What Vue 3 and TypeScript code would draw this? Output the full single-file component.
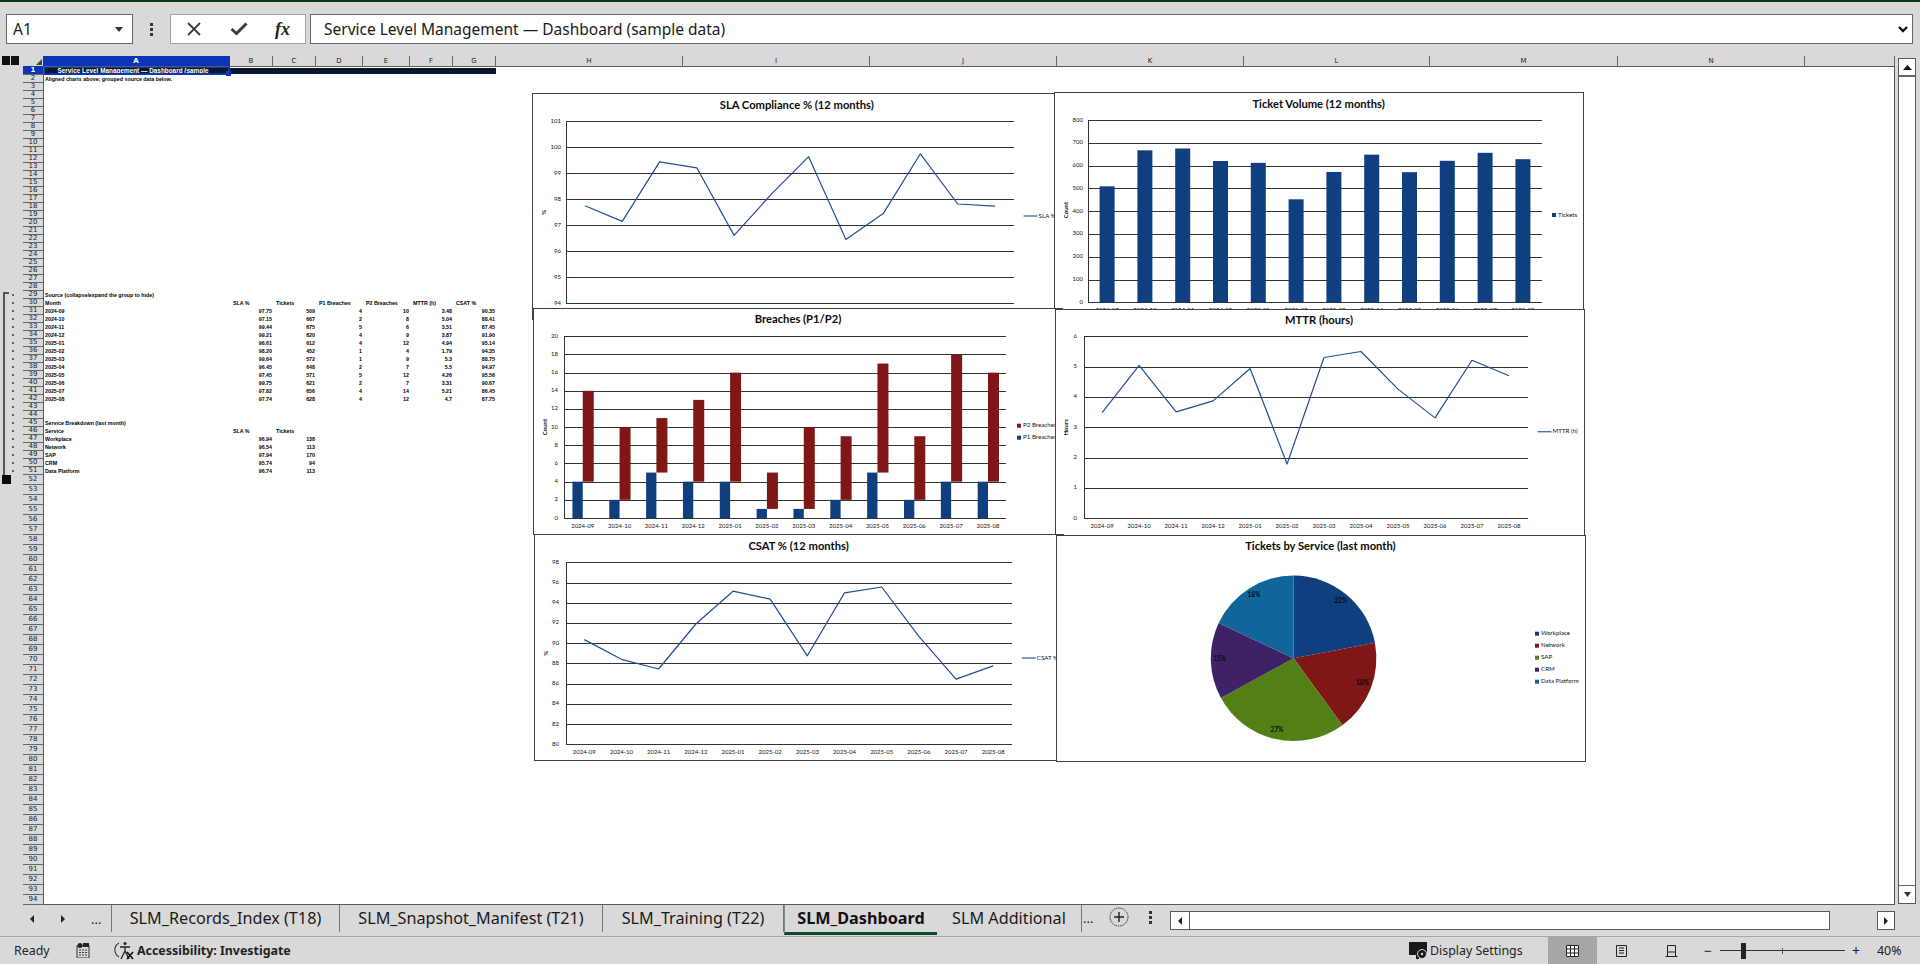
<script setup lang="ts">
interface Plot { l: number; r: number; t: number; b: number }
interface Bar { x: number; y: number; w: number; h: number; fill: string }
interface LegendItem { kind: 'line' | 'box'; x: number; y: number; text: string; fill: string }
interface Slice { d: string; fill: string }
interface PieLabel { x: number; y: number; text: string }
interface Chart {
  x: number; y: number; w: number; h: number; title: string; titleX: number; titleY: number;
  grid: number[]; plot: Plot | null;
  yLabels: { y: number; text: string }[]; yLabelX: number;
  xLabels: { x: number; y: number; text: string }[];
  axisTitle: string; axisX: number; axisY: number;
  bars: Bar[]; line: string; legend: LegendItem[]; slices: Slice[]; pieLabels: PieLabel[];
}

const BLUE = '#0f3f7f';
const RED = '#7f1717';
const months = ['2024-09', '2024-10', '2024-11', '2024-12', '2025-01', '2025-02', '2025-03', '2025-04', '2025-05', '2025-06', '2025-07', '2025-08'];
const sla = [97.75, 97.15, 99.44, 99.21, 96.61, 98.2, 99.64, 96.45, 97.45, 99.75, 97.82, 97.74];
const tickets = [509, 667, 675, 620, 612, 452, 572, 648, 571, 621, 656, 628];
const p1 = [4, 2, 5, 4, 4, 1, 1, 2, 5, 2, 4, 4];
const p2 = [10, 8, 6, 9, 12, 4, 9, 7, 12, 7, 14, 12];
const mttr = [3.48, 5.04, 3.51, 3.87, 4.94, 1.79, 5.3, 5.5, 4.26, 3.31, 5.21, 4.7];
const csat = [90.35, 88.41, 87.45, 91.9, 95.14, 94.35, 88.75, 94.97, 95.56, 90.67, 86.45, 87.75];
const services = [
  { name: 'Workplace', sla: 96.94, tickets: 138, fill: BLUE },
  { name: 'Network', sla: 96.54, tickets: 113, fill: RED },
  { name: 'SAP', sla: 97.94, tickets: 170, fill: '#527f16' },
  { name: 'CRM', sla: 95.74, tickets: 94, fill: '#3f2266' },
  { name: 'Data Platform', sla: 96.74, tickets: 113, fill: '#106699' },
];

function axes(plot: Plot, min: number, max: number, step: number, labelX: number) {
  const sy = (v: number) => plot.b - ((v - min) / (max - min)) * (plot.b - plot.t);
  const grid: number[] = [];
  const yLabels: { y: number; text: string }[] = [];
  for (let v = min; v <= max + 0.001; v += step) {
    grid.push(Math.round(sy(v)) + 0.5);
    yLabels.push({ y: sy(v), text: String(v) });
  }
  const cw = (plot.r - plot.l) / 12;
  const cx = (i: number) => plot.l + cw * (i + 0.5);
  const xLabels = months.map((text, i) => ({ x: cx(i), y: plot.b + 8.6, text }));
  return { sy, cx, cw, grid, yLabels, yLabelX: labelX, xLabels };
}

const empty = { bars: [] as Bar[], line: '', slices: [] as Slice[], pieLabels: [] as PieLabel[] };
const SIZE = { w: 530, h: 227 };

function lineChart(x: number, y: number, title: string, titleX: number, titleY: number, plot: Plot, min: number, max: number, step: number, labelX: number, axisTitle: string, axisX: number, values: number[], legendX: number, legendY: number, legendText: string): Chart {
  const a = axes(plot, min, max, step, labelX);
  return {
    x, y, ...SIZE, title, titleX, titleY, plot, grid: a.grid, yLabels: a.yLabels, yLabelX: labelX, xLabels: a.xLabels,
    axisTitle, axisX, axisY: (plot.t + plot.b) / 2, ...empty,
    line: values.map((v, i) => `${a.cx(i).toFixed(1)},${a.sy(v).toFixed(1)}`).join(' '),
    legend: [{ kind: 'line', x: legendX, y: legendY, text: legendText, fill: '#4a6fb5' }],
  };
}

function ticketChart(): Chart {
  const plot = { l: 1088.2, r: 1541.8, t: 120, b: 302.3 };
  const a = axes(plot, 0, 800, 100, 1083);
  return {
    x: 1054, y: 92, ...SIZE, title: 'Ticket Volume (12 months)', titleX: 1318.6, titleY: 105.2, plot,
    grid: a.grid, yLabels: a.yLabels, yLabelX: 1083, xLabels: a.xLabels, axisTitle: 'Count', axisX: 1066, axisY: 210, ...empty,
    bars: tickets.map((v, i) => ({ x: a.cx(i) - 7.5, y: a.sy(v), w: 15, h: plot.b - a.sy(v), fill: BLUE })),
    legend: [{ kind: 'box', x: 1552, y: 215, text: 'Tickets', fill: BLUE }],
  };
}

function breachChart(): Chart {
  const plot = { l: 564.3, r: 1006.4, t: 336.3, b: 518 };
  const a = axes(plot, 0, 20, 2, 558);
  const bars: Bar[] = [];
  months.forEach((_, i) => {
    bars.push({ x: a.cx(i) - 10.3, y: a.sy(p1[i]), w: 10.3, h: plot.b - a.sy(p1[i]), fill: BLUE });
    bars.push({ x: a.cx(i), y: a.sy(p1[i] + p2[i]), w: 11, h: a.sy(p1[i]) - a.sy(p1[i] + p2[i]), fill: RED });
  });
  return {
    x: 533, y: 308, ...SIZE, title: 'Breaches (P1/P2)', titleX: 798, titleY: 320.5, plot,
    grid: a.grid, yLabels: a.yLabels, yLabelX: 558, xLabels: a.xLabels, axisTitle: 'Count', axisX: 545.7, axisY: 427, ...empty, bars,
    legend: [
      { kind: 'box', x: 1017, y: 425.7, text: 'P2 Breaches', fill: RED },
      { kind: 'box', x: 1017, y: 437.7, text: 'P1 Breaches', fill: BLUE },
    ],
  };
}

function pieChart(): Chart {
  const cx = 1293.6, cy = 658.3, r = 82.8;
  const total = services.reduce((s, v) => s + v.tickets, 0);
  let acc = 0;
  const slices: Slice[] = services.map((s) => {
    const a0 = (acc / total) * Math.PI * 2;
    acc += s.tickets;
    const a1 = (acc / total) * Math.PI * 2;
    const p = (a: number) => `${(cx + r * Math.sin(a)).toFixed(2)} ${(cy - r * Math.cos(a)).toFixed(2)}`;
    return { d: `M${cx} ${cy}L${p(a0)}A${r} ${r} 0 ${a1 - a0 > Math.PI ? 1 : 0} 1 ${p(a1)}Z`, fill: s.fill };
  });
  return {
    x: 1056, y: 535, w: 530, h: 227, title: 'Tickets by Service (last month)', titleX: 1320.4, titleY: 547.5, plot: null,
    grid: [], yLabels: [], yLabelX: 0, xLabels: [], axisTitle: '', axisX: 0, axisY: 0, bars: [], line: '', slices,
    pieLabels: [
      { x: 1341, y: 601.7, text: '22%' },
      { x: 1362.5, y: 683.7, text: '18%' },
      { x: 1277, y: 730, text: '27%' },
      { x: 1220, y: 659.7, text: '15%' },
      { x: 1254, y: 595.7, text: '18%' },
    ],
    legend: services.map((s, i) => ({ kind: 'box' as const, x: 1535, y: 633.7 + i * 12, text: s.name, fill: s.fill })),
  };
}

const charts: Chart[] = [
  lineChart(532, 93, 'SLA Compliance % (12 months)', 796.8, 105.8, { l: 566.4, r: 1013.6, t: 121.3, b: 303.3 }, 94, 101, 1, 561, '%', 544, sla, 1023.6, 216, 'SLA %'),
  ticketChart(),
  breachChart(),
  lineChart(1055, 309, 'MTTR (hours)', 1319, 321, { l: 1083.6, r: 1527.5, t: 336.3, b: 518.3 }, 0, 6, 1, 1077, 'Hours', 1066.8, mttr, 1537.5, 431.7, 'MTTR (h)'),
  lineChart(534, 534, 'CSAT % (12 months)', 798.6, 546.7, { l: 565.7, r: 1011.8, t: 562.3, b: 744.3 }, 80, 98, 2, 559, '%', 546, csat, 1021.8, 658, 'CSAT %'),
  pieChart(),
];

const SHEET_X = 44;
const SHEET_Y = 67;
function chartBox(c: Chart) {
  return { left: `${c.x - SHEET_X}px`, top: `${c.y - SHEET_Y}px`, width: `${c.w}px`, height: `${c.h}px` };
}
function viewBox(c: Chart) {
  return `${c.x + 1} ${c.y + 1} ${c.w - 2} ${c.h - 2}`;
}

const columns = [
  { name: 'A', w: 187 }, { name: 'B', w: 43 }, { name: 'C', w: 43 }, { name: 'D', w: 47 }, { name: 'E', w: 47 }, { name: 'F', w: 43 }, { name: 'G', w: 43 },
  { name: 'H', w: 187 }, { name: 'I', w: 187 }, { name: 'J', w: 187 }, { name: 'K', w: 187 }, { name: 'L', w: 186 }, { name: 'M', w: 188 }, { name: 'N', w: 187 }, { name: '', w: 90 },
];

const rowNumbers = Array.from({ length: 94 }, (_, i) => i + 1);
const inGroup = (n: number) => n >= 29 && n <= 51;

interface Cell { text: string; kind: 'label' | 'head' | 'num' }
function sheetRow(n: number): Cell[] {
  const L = (text: string): Cell => ({ text, kind: 'label' });
  const H = (text: string): Cell => ({ text, kind: 'head' });
  const N = (v: number | string): Cell => ({ text: String(v), kind: 'num' });
  if (n === 2) return [L('Aligned charts above; grouped source data below.')];
  if (n === 29) return [L('Source (collapse/expand the group to hide)')];
  if (n === 30) return [L('Month'), H('SLA %'), H('Tickets'), H('P1 Breaches'), H('P2 Breaches'), H('MTTR (h)'), H('CSAT %')];
  if (n >= 31 && n <= 42) {
    const i = n - 31;
    return [L(months[i]), N(sla[i].toFixed(2)), N(tickets[i]), N(p1[i]), N(p2[i]), N(mttr[i]), N(csat[i].toFixed(2))];
  }
  if (n === 45) return [L('Service Breakdown (last month)')];
  if (n === 46) return [L('Service'), H('SLA %'), H('Tickets')];
  if (n >= 47 && n <= 51) {
    const s = services[n - 47];
    return [L(s.name), N(s.sla.toFixed(2)), N(s.tickets)];
  }
  return [];
}
const dataRows = Array.from({ length: 50 }, (_, i) => ({ n: i + 2, cells: sheetRow(i + 2) }));

const tabs = [
  { name: 'SLM_Records_Index (T18)', w: 228, active: false },
  { name: 'SLM_Snapshot_Manifest (T21)', w: 263, active: false },
  { name: 'SLM_Training (T22)', w: 181, active: false },
  { name: 'SLM_Dashboard', w: 153, active: true },
  { name: 'SLM Additional', w: 145, active: false },
];
</script>

<template>
  <div class="app">
    <div class="accent"></div>

    <div class="formula-row">
      <div class="name-box">
        <span>A1</span>
        <svg width="8" height="5" viewBox="0 0 8 5"><path d="M0 0h8L4 5z" fill="#333" /></svg>
      </div>
      <div class="kebab"><i></i><i></i><i></i></div>
      <div class="fx-buttons">
        <svg class="fx-icon" width="16" height="14" viewBox="0 0 16 14"><path d="M2 1l12 12M14 1L2 13" stroke="#3c3c3c" stroke-width="1.8" fill="none" /></svg>
        <svg class="fx-icon" width="18" height="14" viewBox="0 0 18 14"><path d="M1.5 7l5 4.5L16.500 1.500" stroke="#3c3c3c" stroke-width="3" fill="none" /></svg>
        <span class="fx-text">fx</span>
      </div>
      <div class="formula-input">
        <span>Service Level Management — Dashboard (sample data)</span>
        <svg width="10" height="7" viewBox="0 0 10 7"><path d="M1 1l4 4 4-4" stroke="#111" stroke-width="2.400" fill="none" /></svg>
      </div>
    </div>

    <div class="grid-region">
      <div class="grid-main">
        <div class="col-row">
          <div class="levels"><i></i><i></i></div>
          <div class="corner"><svg width="6" height="6" viewBox="0 0 6 6"><path d="M6 0v6H0z" fill="#444" /></svg></div>
          <div v-for="c in columns" :key="c.name" class="col" :class="{ selected: c.name === 'A' }" :style="{ width: c.w + 'px' }">{{ c.name }}</div>
        </div>

        <div class="body">
          <div class="rows-col">
            <div v-for="n in rowNumbers" :key="n" class="row-line" :class="{ first: n === 1, tall: n > 51 }">
              <div class="gut"><i v-if="inGroup(n)"></i></div>
              <div class="rownum" :class="{ selected: n === 1 }">{{ n }}</div>
            </div>
            <div class="group-bracket"></div>
            <div class="group-button"></div>
          </div>

          <div class="sheet">
            <div class="title-row">
              <div class="band"><span class="a1-text">Service Level Management — Dashboard (sample data)</span></div>
            </div>
            <div v-for="r in dataRows" :key="r.n" class="data-row">
              <span v-for="(c, i) in r.cells" :key="i" class="cell" :class="c.kind">{{ c.text }}</span>
            </div>

            <div class="selection"><i></i></div>

            <div v-for="c in charts" :key="c.title" class="chart" :style="chartBox(c)">
              <svg :width="c.w - 2" :height="c.h - 2" :viewBox="viewBox(c)">
                <text class="chart-title" :x="c.titleX" :y="c.titleY" text-anchor="middle" dominant-baseline="middle">{{ c.title }}</text>
                <template v-if="c.plot">
                  <line v-for="g in c.grid" :key="g" class="gridline" :x1="c.plot.l" :x2="c.plot.r" :y1="g" :y2="g" />
                  <line class="gridline" :x1="Math.round(c.plot.l) + 0.5" :x2="Math.round(c.plot.l) + 0.5" :y1="c.plot.t" :y2="c.plot.b" />
                  <text v-for="l in c.yLabels" :key="l.text" class="axis" :x="c.yLabelX" :y="l.y" text-anchor="end" dominant-baseline="middle">{{ l.text }}</text>
                  <text v-for="l in c.xLabels" :key="l.text" class="axis" :x="l.x" :y="l.y" text-anchor="middle" dominant-baseline="middle">{{ l.text }}</text>
                  <text class="axis-title" :transform="`translate(${c.axisX} ${c.axisY}) rotate(-90)`" text-anchor="middle" dominant-baseline="middle">{{ c.axisTitle }}</text>
                </template>
                <rect v-for="(b, i) in c.bars" :key="i" :x="b.x" :y="b.y" :width="b.w" :height="b.h" :fill="b.fill" />
                <polyline v-if="c.line" class="series" :points="c.line" />
                <path v-for="(s, i) in c.slices" :key="i" :d="s.d" :fill="s.fill" />
                <text v-for="(l, i) in c.pieLabels" :key="i" class="pie-label" :x="l.x" :y="l.y" text-anchor="middle" dominant-baseline="middle">{{ l.text }}</text>
                <g v-for="l in c.legend" :key="l.text">
                  <template v-if="l.kind === 'line'">
                    <line :x1="l.x" :x2="l.x + 14" :y1="l.y" :y2="l.y" :stroke="l.fill" stroke-width="1.400" />
                    <text class="legend" :x="l.x + 15" :y="l.y" dominant-baseline="middle">{{ l.text }}</text>
                  </template>
                  <template v-else>
                    <rect :x="l.x" :y="l.y - 2" width="4" height="4" :fill="l.fill" />
                    <text class="legend" :x="l.x + 6" :y="l.y" dominant-baseline="middle">{{ l.text }}</text>
                  </template>
                </g>
              </svg>
            </div>
          </div>
        </div>
      </div>

      <div class="vscroll">
        <div class="vbtn up"><svg width="9" height="5" viewBox="0 0 9 5"><path d="M0 5h9L4.500 0z" fill="#111" /></svg></div>
        <div class="vbtn down"><svg width="7" height="5" viewBox="0 0 7 5"><path d="M0 0h7L3.500 5z" fill="#333" /></svg></div>
      </div>
    </div>

    <div class="tab-bar">
      <div class="tab-nav">
        <svg width="4" height="8" viewBox="0 0 4 8"><path d="M4 0v8L0 4z" fill="#222" /></svg>
        <svg width="4" height="8" viewBox="0 0 4 8"><path d="M0 0v8l4-4z" fill="#222" /></svg>
        <span>...</span>
      </div>
      <div v-for="t in tabs" :key="t.name" class="tab" :class="{ active: t.active }" :style="{ width: t.w + 'px' }">{{ t.name }}</div>
      <span class="tab-more">...</span>
      <svg class="add-sheet" width="20" height="20" viewBox="0 0 20 20">
        <circle cx="10" cy="10" r="9" fill="none" stroke="#333" stroke-dasharray="1.500 .8" />
        <path d="M10 5v10M5 10h10" stroke="#222" stroke-width="1.400" />
      </svg>
      <div class="kebab small"><i></i><i></i><i></i></div>
      <div class="hscroll">
        <div class="hbtn"><svg width="4" height="8" viewBox="0 0 4 8"><path d="M4 0v8L0 4z" fill="#222" /></svg></div>
      </div>
      <div class="hbtn alone"><svg width="4" height="8" viewBox="0 0 4 8"><path d="M0 0v8l4-4z" fill="#222" /></svg></div>
    </div>

    <div class="status-bar">
      <span class="ready">Ready</span>
      <svg class="calc" width="14" height="15" viewBox="0 0 14 15">
        <rect x="1" y="3" width="12" height="12" fill="none" stroke="#333" />
        <circle cx="4" cy="2.500" r="2.500" fill="#222" /><rect x="7" y="0" width="6" height="4" fill="#222" />
        <path d="M3 7h2M6 7h2M9 7h2M3 9.500h2M6 9.500h2M9 9.500h2M3 12h2M6 12h2M9 12h2" stroke="#333" />
      </svg>
      <svg class="a11y" width="21" height="19" viewBox="0 0 21 19">
        <path d="M5 2a8 8 0 0 0 0 14" fill="none" stroke="#333" stroke-width="1.100" />
        <circle cx="11" cy="2.500" r="1.500" fill="#222" />
        <path d="M6 6h10M11 6v4M7 18l4-8 4 8" fill="none" stroke="#222" stroke-width="1.300" />
        <path d="M13 11l6 7M19 11l-6 7" stroke="#111" stroke-width="1.600" />
      </svg>
      <span class="a11y-text">Accessibility: Investigate</span>
      <span class="spacer"></span>
      <svg class="display" width="19" height="18" viewBox="0 0 19 18">
        <rect x="0" y="0" width="18" height="13" fill="#1a1a1a" />
        <rect x="7" y="13" width="3" height="4" fill="#1a1a1a" />
        <circle cx="13" cy="12" r="4.500" fill="#1a1a1a" stroke="#d9d9d9" />
        <circle cx="13" cy="12" r="1.200" fill="#d9d9d9" />
      </svg>
      <span class="display-text">Display Settings</span>
      <div class="view-btn on">
        <svg width="13" height="12" viewBox="0 0 13 12"><rect width="13" height="12" fill="#fff" /><path d="M.5 .5h12v11H.5zM.5 4h12M.5 8h12M4.500 .5v11M8.500 .5v11" fill="none" stroke="#222" /></svg>
      </div>
      <div class="view-btn">
        <svg width="11" height="12" viewBox="0 0 11 12"><path d="M.5 .5h10v11H.5zM3 3h5M3 5.500h5M3 8h5" fill="none" stroke="#222" /></svg>
      </div>
      <div class="view-btn">
        <svg width="13" height="12" viewBox="0 0 13 12"><path d="M.5 11.500h12M2.500 11V.5h8V11M2.500 7h8" fill="none" stroke="#222" /></svg>
      </div>
      <div class="zoom">
        <span class="zoom-sign">−</span>
        <div class="slider"><i class="tick"></i><i class="thumb"></i></div>
        <span class="zoom-sign">+</span>
      </div>
      <span class="percent">40%</span>
    </div>
  </div>
</template>

<style>
html, body { overflow: hidden; background: #d9d9d9; }
</style>

<style scoped>
.app {
  width: 1920px;
  height: 964px;
  background: #d9d9d9;
  display: flex;
  flex-direction: column;
  overflow: hidden;
  font-family: "Noto Sans", "Open Sans", sans-serif;
  color: #1a1a1a;
}
.accent { height: 2px; background: #0b3b1e; flex: none; }

.formula-row {
  height: 54px;
  flex: none;
  display: flex;
  align-items: flex-start;
  padding: 12px 7px 0 6px;
  box-sizing: border-box;
}
.name-box {
  width: 127px;
  height: 30px;
  box-sizing: border-box;
  border: 1px solid #666;
  background: #fff;
  display: flex;
  align-items: center;
  justify-content: space-between;
  padding: 0 9px 0 6px;
  font-size: 15.500px;
}
.kebab {
  width: 37px;
  height: 30px;
  display: flex;
  flex-direction: column;
  align-items: center;
  justify-content: center;
  gap: 2px;
  flex: none;
}
.kebab i { width: 3px; height: 3px; background: #333; display: block; }
.fx-buttons {
  width: 136px;
  height: 30px;
  box-sizing: border-box;
  border: 1px solid #a3a3a3;
  background: #fff;
  display: flex;
  align-items: center;
  justify-content: space-between;
  padding: 0 15px;
  flex: none;
}
.fx-text {
  font-family: "Liberation Serif", serif;
  font-style: italic;
  font-weight: 700;
  font-size: 18px;
  line-height: 20px;
  color: #222;
}
.formula-input {
  margin-left: 4px;
  flex: 1;
  height: 30px;
  box-sizing: border-box;
  border: 1px solid #666;
  background: #fff;
  display: flex;
  align-items: center;
  justify-content: space-between;
  padding: 0 4px 0 13px;
  font-size: 15.500px;
}

.grid-region { height: 849px; flex: none; display: flex; }
.grid-main { width: 1895px; flex: none; display: flex; flex-direction: column; }

.col-row { height: 10px; display: flex; flex: none; }
.levels { width: 23px; display: flex; gap: 1px; padding-left: 2px; box-sizing: border-box; flex: none; }
.levels i { width: 8px; height: 9px; background: #111; display: block; }
.corner {
  width: 20px;
  display: flex;
  justify-content: flex-end;
  align-items: flex-end;
  padding: 0 1px 1px 0;
  box-sizing: border-box;
  flex: none;
}
.col {
  box-sizing: border-box;
  flex: none;
  border-right: 1px solid #666;
  font-family: "DejaVu Sans", sans-serif;
  font-size: 7px;
  line-height: 10px;
  text-align: center;
  color: #222;
}
.col.selected { background: #0a35b5; color: #fff; border-right-color: #0a35b5; font-weight: 700; }

.body { height: 839px; display: flex; flex: none; }
.rows-col { width: 43px; flex: none; position: relative; }
.row-line { height: 8px; display: flex; box-sizing: border-box; }
.row-line.first { height: 9px; }
.row-line.tall { height: 10px; }
.gut { width: 23px; display: flex; align-items: center; justify-content: flex-end; padding-right: 9px; box-sizing: border-box; flex: none; }
.gut i { width: 2px; height: 2px; background: #666; display: block; }
.rownum {
  width: 20px;
  box-sizing: border-box;
  border-bottom: 1px solid #666;
  font-family: "DejaVu Sans", sans-serif;
  font-size: 7px;
  line-height: 7px;
  text-align: center;
  color: #222;
  overflow: hidden;
}
.row-line.first .rownum { line-height: 8px; }
.row-line.tall .rownum { line-height: 9px; }
.rownum.selected { background: #0a35b5; color: #fff; font-weight: 700; }
.group-bracket {
  position: absolute;
  left: 3px;
  top: 226px;
  width: 6px;
  height: 183px;
  box-sizing: border-box;
  border-left: 2px solid #555;
  border-top: 2px solid #555;
}
.group-button { position: absolute; left: 2px; top: 409px; width: 9px; height: 9px; background: #0a0a0a; }

.sheet {
  width: 1852px;
  flex: none;
  box-sizing: border-box;
  border: 1px solid #595959;
  background: #fff;
  position: relative;
  overflow: hidden;
}
.title-row { height: 8px; padding-top: 1px; box-sizing: border-box; }
.band {
  width: 452px;
  height: 6px;
  background: #06182f;
  overflow: hidden;
}
.a1-text {
  display: block;
  width: 160px;
  margin-left: 9px;
  color: #fff;
  font: 700 6.400px/5px "Liberation Sans", sans-serif;
  text-align: center;
}
.data-row {
  height: 8px;
  display: grid;
  grid-template-columns: 186px 43px 43px 47px 47px 43px 43px;
  font: 700 5.300px/8px "Liberation Sans", sans-serif;
  color: #000;
}
.cell { white-space: nowrap; box-sizing: border-box; }
.cell.label { padding-left: 1px; }
.cell.head { padding-left: 3px; }
.cell.num { text-align: right; padding-right: 1px; }
.selection {
  position: absolute;
  left: -1px;
  top: -1px;
  width: 187px;
  height: 9px;
  box-sizing: border-box;
  border: 2px solid #0a35b5;
  z-index: 1;
}
.selection i { position: absolute; right: -3px; bottom: -3px; width: 5px; height: 5px; background: #0a35b5; display: block; }

.chart {
  position: absolute;
  box-sizing: border-box;
  border: 1px solid #404040;
  background: #fff;
  overflow: hidden;
  z-index: 2;
}
.chart svg { display: block; }
.chart-title { font: 700 11.200px Lato, "Liberation Sans", sans-serif; fill: #0a0a0a; }
.gridline { stroke: #333; stroke-width: 1; shape-rendering: crispEdges; }
.axis { font: 400 6px Lato, "Liberation Sans", sans-serif; fill: #111; }
.axis-title { font: 700 6px Lato, "Liberation Sans", sans-serif; fill: #111; }
.legend { font: 400 6.200px Lato, "Liberation Sans", sans-serif; fill: #111; }
.pie-label { font: 700 6.500px Lato, "Liberation Sans", sans-serif; fill: #0a0a0a; }
.series { fill: none; stroke: #1f4e96; stroke-width: 1.200; stroke-linejoin: round; }

.vscroll {
  width: 18px;
  flex: none;
  margin: 2px 0 1px 3px;
  box-sizing: border-box;
  border: 1px solid #595959;
  background: #fff;
  display: flex;
  flex-direction: column;
  justify-content: space-between;
}
.vbtn { height: 18px; display: flex; align-items: center; justify-content: center; box-sizing: border-box; }
.vbtn.up { border-bottom: 2px solid #666; }
.vbtn.down { border-top: 1px solid #666; }

.tab-bar {
  height: 31px;
  flex: none;
  display: flex;
  align-items: flex-start;
  font-size: 16.200px;
  border-bottom: 1px solid #a6a6a6;
  box-sizing: content-box;
}
.tab-nav {
  width: 112px;
  height: 27px;
  flex: none;
  display: flex;
  align-items: center;
  box-sizing: border-box;
  padding-left: 30px;
  gap: 27px;
  border-right: 1px solid #777;
}
.tab-nav span { margin-left: -1px; font-size: 13px; line-height: 12px; }
.tab {
  height: 27px;
  line-height: 27px;
  box-sizing: border-box;
  text-align: center;
  flex: none;
  border-right: 1px solid #777;
  white-space: nowrap;
  overflow: hidden;
}
.tab.active {
  height: 30px;
  font-weight: 700;
  border-right: 0;
  border-left: 1px solid #888;
  border-bottom: 3px solid #0f4a2a;
  color: #111;
}
.tab:last-of-type { border-right: 0; }
.tab-more { width: 20px; flex: none; line-height: 27px; font-size: 13px; margin-left: 1px; }
.add-sheet { flex: none; margin: 2px 0 0 6px; }
.kebab.small { width: 20px; height: 20px; margin: 2px 0 0 11px; }
.hscroll {
  width: 660px;
  height: 19px;
  margin: 6px 0 0 10px;
  box-sizing: border-box;
  border: 1px solid #595959;
  background: #fff;
  flex: none;
  display: flex;
}
.hbtn {
  width: 19px;
  height: 17px;
  display: flex;
  align-items: center;
  justify-content: center;
  box-sizing: border-box;
  border-right: 1px solid #595959;
}
.hbtn.alone {
  width: 18px;
  height: 19px;
  margin: 6px 0 0 47px;
  background: #fff;
  border: 1px solid #595959;
  flex: none;
}

.status-bar {
  height: 27px;
  flex: none;
  display: flex;
  align-items: center;
  font-size: 12.400px;
  padding-left: 14px;
  color: #222;
}
.ready { width: 62px; flex: none; }
.calc { flex: none; }
.a11y { flex: none; margin-left: 24px; }
.a11y-text { font-weight: 700; margin-left: 2px; flex: none; }
.spacer { flex: 1; }
.display { flex: none; }
.display-text { flex: none; margin-left: 2px; width: 118px; }
.view-btn { width: 49px; height: 27px; display: flex; align-items: center; justify-content: center; flex: none; margin-right: 1px; }
.view-btn.on { background: #a6a6a6; margin-right: 0; }
.zoom { display: flex; align-items: center; flex: none; margin-left: 4px; }
.zoom-sign { font-size: 14px; width: 14px; text-align: center; }
.slider { width: 125px; height: 16px; position: relative; margin: 0 4px 0 5px; background: linear-gradient(#333, #333) center / 100% 1px no-repeat; }
.slider .tick { position: absolute; left: 62px; top: 5px; width: 1px; height: 6px; background: #555; }
.slider .thumb { position: absolute; left: 21px; top: 0; width: 5px; height: 16px; background: #222; }
.percent { width: 43px; flex: none; margin-left: 14px; }
</style>
